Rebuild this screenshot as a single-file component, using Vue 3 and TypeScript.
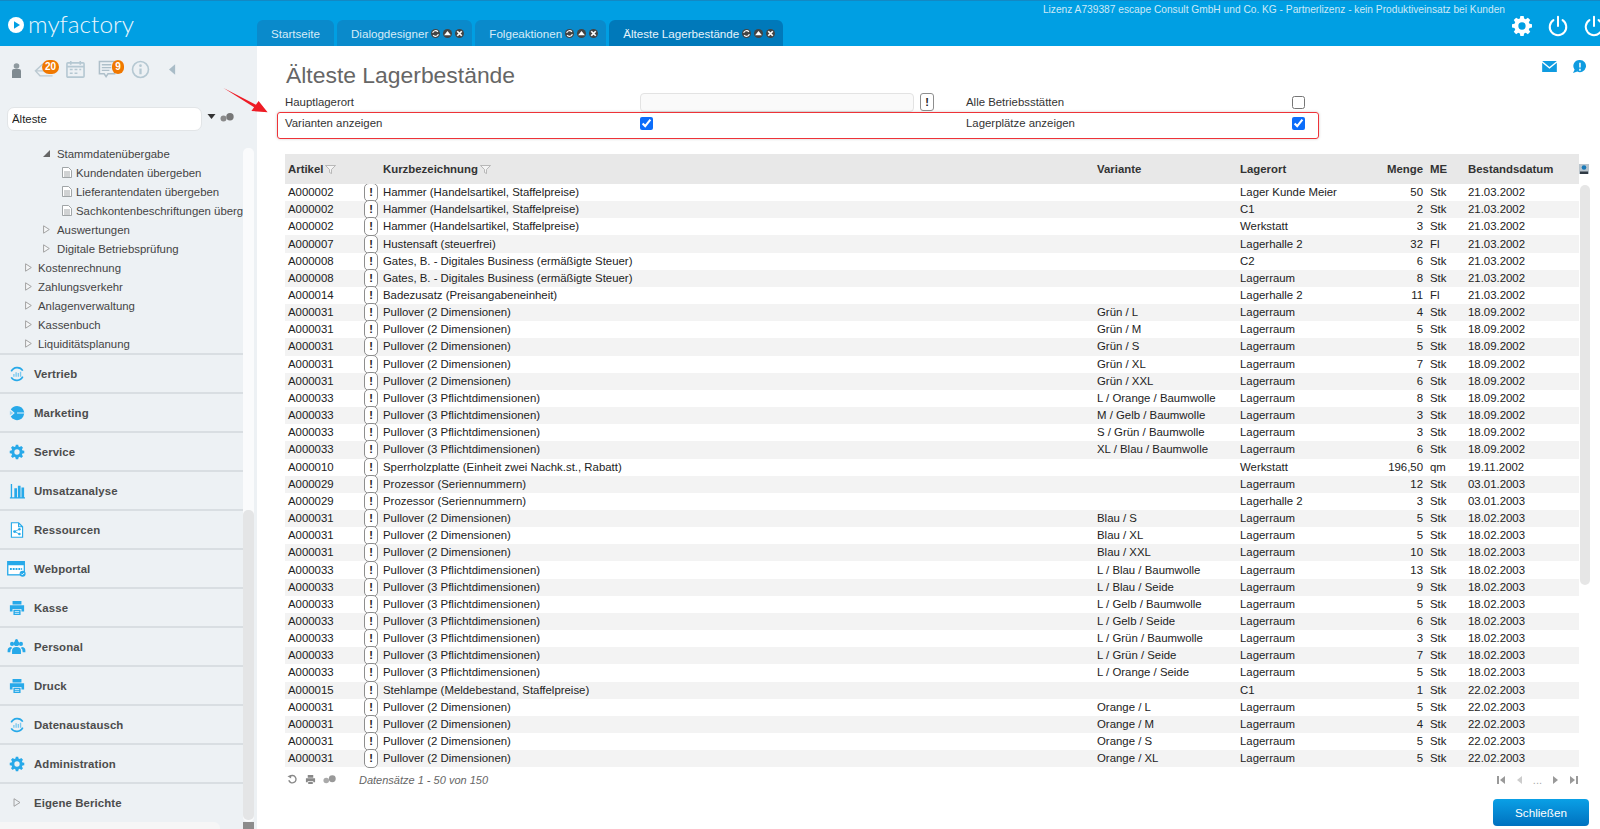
<script setup lang="ts">
interface Row { a: string; n: string; v: string; o: string; m: string; e: string; d: string }
const P2 = 'Pullover (2 Dimensionen)'
const P3 = 'Pullover (3 Pflichtdimensionen)'
const H = 'Hammer (Handelsartikel, Staffelpreise)'
const G = 'Gates, B. - Digitales Business (ermäßigte Steuer)'
const raw: string[][] = [
  ['A000002', H, '', 'Lager Kunde Meier', '50', 'Stk', '21.03.2002'],
  ['A000002', H, '', 'C1', '2', 'Stk', '21.03.2002'],
  ['A000002', H, '', 'Werkstatt', '3', 'Stk', '21.03.2002'],
  ['A000007', 'Hustensaft (steuerfrei)', '', 'Lagerhalle 2', '32', 'Fl', '21.03.2002'],
  ['A000008', G, '', 'C2', '6', 'Stk', '21.03.2002'],
  ['A000008', G, '', 'Lagerraum', '8', 'Stk', '21.03.2002'],
  ['A000014', 'Badezusatz (Preisangabeneinheit)', '', 'Lagerhalle 2', '11', 'Fl', '21.03.2002'],
  ['A000031', P2, 'Grün / L', 'Lagerraum', '4', 'Stk', '18.09.2002'],
  ['A000031', P2, 'Grün / M', 'Lagerraum', '5', 'Stk', '18.09.2002'],
  ['A000031', P2, 'Grün / S', 'Lagerraum', '5', 'Stk', '18.09.2002'],
  ['A000031', P2, 'Grün / XL', 'Lagerraum', '7', 'Stk', '18.09.2002'],
  ['A000031', P2, 'Grün / XXL', 'Lagerraum', '6', 'Stk', '18.09.2002'],
  ['A000033', P3, 'L / Orange / Baumwolle', 'Lagerraum', '8', 'Stk', '18.09.2002'],
  ['A000033', P3, 'M / Gelb / Baumwolle', 'Lagerraum', '3', 'Stk', '18.09.2002'],
  ['A000033', P3, 'S / Grün / Baumwolle', 'Lagerraum', '3', 'Stk', '18.09.2002'],
  ['A000033', P3, 'XL / Blau / Baumwolle', 'Lagerraum', '6', 'Stk', '18.09.2002'],
  ['A000010', 'Sperrholzplatte (Einheit zwei Nachk.st., Rabatt)', '', 'Werkstatt', '196,50', 'qm', '19.11.2002'],
  ['A000029', 'Prozessor (Seriennummern)', '', 'Lagerraum', '12', 'Stk', '03.01.2003'],
  ['A000029', 'Prozessor (Seriennummern)', '', 'Lagerhalle 2', '3', 'Stk', '03.01.2003'],
  ['A000031', P2, 'Blau / S', 'Lagerraum', '5', 'Stk', '18.02.2003'],
  ['A000031', P2, 'Blau / XL', 'Lagerraum', '5', 'Stk', '18.02.2003'],
  ['A000031', P2, 'Blau / XXL', 'Lagerraum', '10', 'Stk', '18.02.2003'],
  ['A000033', P3, 'L / Blau / Baumwolle', 'Lagerraum', '13', 'Stk', '18.02.2003'],
  ['A000033', P3, 'L / Blau / Seide', 'Lagerraum', '9', 'Stk', '18.02.2003'],
  ['A000033', P3, 'L / Gelb / Baumwolle', 'Lagerraum', '5', 'Stk', '18.02.2003'],
  ['A000033', P3, 'L / Gelb / Seide', 'Lagerraum', '6', 'Stk', '18.02.2003'],
  ['A000033', P3, 'L / Grün / Baumwolle', 'Lagerraum', '3', 'Stk', '18.02.2003'],
  ['A000033', P3, 'L / Grün / Seide', 'Lagerraum', '7', 'Stk', '18.02.2003'],
  ['A000033', P3, 'L / Orange / Seide', 'Lagerraum', '5', 'Stk', '18.02.2003'],
  ['A000015', 'Stehlampe (Meldebestand, Staffelpreise)', '', 'C1', '1', 'Stk', '22.02.2003'],
  ['A000031', P2, 'Orange / L', 'Lagerraum', '5', 'Stk', '22.02.2003'],
  ['A000031', P2, 'Orange / M', 'Lagerraum', '4', 'Stk', '22.02.2003'],
  ['A000031', P2, 'Orange / S', 'Lagerraum', '5', 'Stk', '22.02.2003'],
  ['A000031', P2, 'Orange / XL', 'Lagerraum', '5', 'Stk', '22.02.2003'],
]
const rows: Row[] = raw.map(([a, n, v, o, m, e, d]) => ({ a, n, v, o, m, e, d }))

const tabs = [
  { label: 'Startseite', tools: false, active: false },
  { label: 'Dialogdesigner', tools: true, active: false },
  { label: 'Folgeaktionen', tools: true, active: false },
  { label: 'Älteste Lagerbestände', tools: true, active: true },
]
const tree = [
  { label: 'Stammdatenübergabe', level: 2, kind: 'open' },
  { label: 'Kundendaten übergeben', level: 3, kind: 'doc' },
  { label: 'Lieferantendaten übergeben', level: 3, kind: 'doc' },
  { label: 'Sachkontenbeschriftungen übergeben', level: 3, kind: 'doc' },
  { label: 'Auswertungen', level: 2, kind: 'closed' },
  { label: 'Digitale Betriebsprüfung', level: 2, kind: 'closed' },
  { label: 'Kostenrechnung', level: 1, kind: 'closed' },
  { label: 'Zahlungsverkehr', level: 1, kind: 'closed' },
  { label: 'Anlagenverwaltung', level: 1, kind: 'closed' },
  { label: 'Kassenbuch', level: 1, kind: 'closed' },
  { label: 'Liquiditätsplanung', level: 1, kind: 'closed' },
]
const modules = [
  { label: 'Vertrieb', icon: 'cycle' },
  { label: 'Marketing', icon: 'pie' },
  { label: 'Service', icon: 'gear' },
  { label: 'Umsatzanalyse', icon: 'bars' },
  { label: 'Ressourcen', icon: 'share' },
  { label: 'Webportal', icon: 'web' },
  { label: 'Kasse', icon: 'print' },
  { label: 'Personal', icon: 'people' },
  { label: 'Druck', icon: 'print' },
  { label: 'Datenaustausch', icon: 'cycle' },
  { label: 'Administration', icon: 'gear' },
  { label: 'Eigene Berichte', icon: 'tri' },
]
const gearPath = 'M10.2 1h3.6l.5 2.7 1.8.8 2.3-1.6 2.6 2.6-1.6 2.3.8 1.8 2.7.5v3.6l-2.7.5-.8 1.8 1.6 2.3-2.6 2.6-2.3-1.6-1.8.8-.5 2.7h-3.6l-.5-2.7-1.8-.8-2.3 1.6-2.6-2.6 1.6-2.3-.8-1.8-2.7-.5v-3.6l2.7-.5.8-1.8-1.6-2.3 2.6-2.6 2.3 1.6 1.8-.8zM12 8a4 4 0 1 0 0 8 4 4 0 0 0 0-8z'
</script>

<template>
  <div class="app">
    <header class="topbar">
      <div class="logo">
        <svg class="logo-mark" viewBox="0 0 16 16"><circle cx="8" cy="8" r="8" fill="#fff" /><path d="M6 4.200 12 8l-6 3.800z" fill="#009fe3" /></svg>
        <span class="logo-text">myfactory</span>
      </div>
      <nav class="tabs">
        <div v-for="t in tabs" :key="t.label" class="tab" :class="{ active: t.active }">
          <span>{{ t.label }}</span>
          <span v-if="t.tools" class="tab-tools">
            <i class="tool"><svg viewBox="0 0 8 8"><path d="M1.500 3.500a2.600 2.600 0 0 1 4.600-1M6.500 4.500a2.600 2.600 0 0 1-4.600 1" fill="none" stroke="#fff" stroke-width="1.100" /></svg></i>
            <i class="tool"><svg viewBox="0 0 8 8"><path d="M4 1.800 7 5.500H1z" fill="#fff" /></svg></i>
            <i class="tool"><svg viewBox="0 0 8 8"><path d="m2 2 4 4M6 2 2 6" stroke="#fff" stroke-width="1.500" /></svg></i>
          </span>
        </div>
      </nav>
      <div class="top-right">
        <div class="license">Lizenz A739387 escape Consult GmbH und Co. KG - Partnerlizenz - kein Produktiveinsatz bei Kunden</div>
        <div class="top-icons">
          <svg class="top-icon" viewBox="0 0 24 24"><path :d="gearPath" fill="#fff" fill-rule="evenodd" /></svg>
          <svg class="top-icon" viewBox="0 0 24 24"><path d="M7 5.500a9 9 0 1 0 10 0M12 2v10" fill="none" stroke="#fff" stroke-width="2.200" stroke-linecap="round" /></svg>
          <svg class="top-icon" viewBox="0 0 24 24"><path d="M7 5.500a9 9 0 1 0 10 0M12 2v10" fill="none" stroke="#fff" stroke-width="2.200" stroke-linecap="round" /></svg>
        </div>
      </div>
    </header>

    <div class="body">
      <aside class="sidebar">
        <div class="quick">
          <svg class="q q-person" viewBox="0 0 10 15"><circle cx="5.500" cy="3" r="2.800" fill="#8f9a9f" /><path d="M1 15V8q0-2 2-2h5q2 0 2 2v7z" fill="#7f8a90" /></svg>
          <span class="q-wrap q-inbox">
            <svg viewBox="0 0 22 20"><path d="M10 3 1.500 11l5 5.500h14M1.500 11h12" fill="none" stroke="#bccad2" stroke-width="1.600" /></svg>
            <b class="badge">20</b>
          </span>
          <svg class="q q-cal" viewBox="0 0 20 20"><rect x="1" y="3" width="18" height="15" rx="1" fill="none" stroke="#b5c8d2" stroke-width="1.700" /><path d="M1 7h18M5 1v4M15 1v4M4 10h3M9 10h3M14 10h2M4 14h3M9 14h3" stroke="#b5c8d2" stroke-width="1.700" /></svg>
          <span class="q-wrap q-list">
            <svg viewBox="0 0 20 20"><path d="M1.500 1.500h16v13h-7l-2 3-2-3h-5z" fill="none" stroke="#aebfc9" stroke-width="1.600" /><path d="M4 5h10M4 8h10M4 11h8" stroke="#aebfc9" stroke-width="1.400" /></svg>
            <b class="badge small">9</b>
          </span>
          <svg class="q q-info" viewBox="0 0 20 20"><circle cx="10" cy="10" r="8.400" fill="none" stroke="#b5c8d2" stroke-width="1.700" /><circle cx="10" cy="6" r="1.400" fill="#b5c8d2" /><path d="M10 9v6" stroke="#b5c8d2" stroke-width="2.400" /></svg>
          <svg class="q q-back" viewBox="0 0 8 12"><path d="M7 0v12L0 6z" fill="#a9bcc7" /></svg>
        </div>
        <div class="search">
          <input class="search-input" value="Älteste" />
          <svg class="caret" viewBox="0 0 8 5"><path d="M0 0h8L4 5z" fill="#333" /></svg>
          <svg class="dots" viewBox="0 0 14 9"><circle cx="3.500" cy="5.500" r="3" fill="#8a8a8a" /><circle cx="10" cy="3.700" r="3.700" fill="#777" /></svg>
        </div>
        <div class="tree">
          <div v-for="n in tree" :key="n.label" class="tree-row" :class="'lvl' + n.level">
            <svg v-if="n.kind === 'open'" class="tw" viewBox="0 0 7 7"><path d="M7 0v7H0z" fill="#666" /></svg>
            <svg v-else-if="n.kind === 'closed'" class="tw" viewBox="0 0 7 9"><path d="M.6.800v7.400L6.300 4.500z" fill="#f6f7f8" stroke="#a2a2a2" /></svg>
            <svg v-else class="docicon" viewBox="0 0 10 11"><path d="M.5.500h6l3 3v7h-9zM2 5h6M2 7h6M2 9h6" fill="#fff" stroke="#8a8f92" stroke-width=".8" /></svg>
            <span>{{ n.label }}</span>
          </div>
        </div>
        <div class="modules">
          <div v-for="m in modules" :key="m.label" class="module">
            <span class="micon">
              <svg v-if="m.icon === 'cycle'" viewBox="0 0 18 18"><path d="M2.500 6a7.500 7.500 0 0 1 13-.8M15.500 12a7.500 7.500 0 0 1-13 .8" fill="none" stroke="#27a9e9" stroke-width="1.800" /><path d="M5.500 9v3M8 7v5M10.500 8v4M13 6.500V12" stroke="#7cc9ef" stroke-width="1.500" /></svg>
              <svg v-else-if="m.icon === 'pie'" viewBox="0 0 18 18"><path d="M9 1a8 8 0 1 1-7 11.800L6.500 9 2 5.200A8 8 0 0 1 9 1z" fill="#27a9e9" /><path d="M1 6.500 5 9l-4 2.500z" fill="#9ad6f4" /><path d="M9 9h8" stroke="#fff" stroke-width="1" /></svg>
              <svg v-else-if="m.icon === 'gear'" viewBox="0 0 24 24"><path :d="gearPath" fill="#27a9e9" fill-rule="evenodd" /></svg>
              <svg v-else-if="m.icon === 'bars'" viewBox="0 0 18 18"><path d="M2 1h1.500v16H2zM6 6h3v10H6zM10 3h3v13h-3zM14 5h3v11h-3zM1 16h17v1.500H1z" fill="#27a9e9" /></svg>
              <svg v-else-if="m.icon === 'share'" viewBox="0 0 16 20"><path d="M1 1h9l5 5v13H1zM10 1v5h5" fill="#fff" stroke="#27a9e9" stroke-width="1.400" /><circle cx="5" cy="12" r="1.800" fill="#27a9e9" /><circle cx="11" cy="9" r="1.600" fill="#27a9e9" /><circle cx="11" cy="15" r="1.600" fill="#27a9e9" /><path d="m5 12 6-3M5 12l6 3" stroke="#27a9e9" /></svg>
              <svg v-else-if="m.icon === 'web'" class="wide" viewBox="0 0 20 17"><rect x=".7" y=".7" width="17.600" height="14" fill="#fff" stroke="#27a9e9" stroke-width="1.400" /><path d="M1 1h17v3.500H1z" fill="#27a9e9" /><path d="M3 8.500h13" stroke="#27a9e9" stroke-width="2" stroke-dasharray="2 1" /><circle cx="16.500" cy="13.500" r="3.200" fill="#27a9e9" /><path d="m15 13.500 1.200 1.200 2-2" stroke="#fff" fill="none" /></svg>
              <svg v-else-if="m.icon === 'print'" viewBox="0 0 18 18"><path d="M4 1h10v4H4zM1 6h16v7h-3v-3H4v3H1zM5 11h8v6H5z" fill="#27a9e9" /><path d="M6.500 13h5M6.500 15h5" stroke="#fff" stroke-width=".8" /></svg>
              <svg v-else-if="m.icon === 'people'" class="wide" viewBox="0 0 20 18"><circle cx="10" cy="5" r="3" fill="#27a9e9" /><circle cx="5" cy="5.500" r="2.300" fill="#27a9e9" /><circle cx="15" cy="5.500" r="2.300" fill="#27a9e9" /><circle cx="10" cy="1.800" r="1.700" fill="#27a9e9" /><path d="M5 17v-4q0-4 5-4t5 4v4zM0 13q0-4 4-4l1 1q-2 1-2 5H0zM20 13q0-4-4-4l-1 1q2 1 2 5h3z" fill="#27a9e9" /></svg>
              <svg v-else class="small-tri" viewBox="0 0 8 10"><path d="M.7.800v8.400L7.300 5z" fill="none" stroke="#999" /></svg>
            </span>
            <span>{{ m.label }}</span>
          </div>
        </div>
        <div class="vscroll"><div class="vthumb"></div></div>
        <div class="hscroll"></div>
        <div class="corner"></div>
      </aside>

      <main class="main">
        <div class="title-row">
          <h1 class="title">Älteste Lagerbestände</h1>
          <div class="title-icons">
            <svg class="mail" viewBox="0 0 16 12"><path d="M0 0h16L8 6.500z" fill="#0f9be0" /><path d="M0 2v10h16V2L8 8.500z" fill="#0f9be0" /></svg>
            <svg class="help" viewBox="0 0 16 16"><path d="M8.500 1a6.500 6.500 0 1 1-2.800 12.400L1 15l1.800-3.600A6.500 6.500 0 0 1 8.500 1z" fill="#0f9be0" /><path d="M8.500 4v5M8.500 10.500v2" stroke="#fff" stroke-width="1.600" /></svg>
          </div>
        </div>
        <div class="form">
          <label>Hauptlagerort</label>
          <div class="field">
            <input class="txt" />
            <button class="ex ex-form">!</button>
          </div>
          <label>Alle Betriebsstätten</label>
          <input type="checkbox" class="chk" />
          <label>Varianten anzeigen</label>
          <div><input type="checkbox" class="chk" checked /></div>
          <label>Lagerplätze anzeigen</label>
          <input type="checkbox" class="chk" checked />
        </div>

        <div class="grid-head row-grid">
          <span class="hc">Artikel<svg class="flt" viewBox="0 0 11 9"><path d="M.5.500h10L6.500 4.500v4l-2-1v-3z" fill="#f4f4f4" stroke="#aaa" stroke-width=".8" /></svg></span>
          <span></span>
          <span class="hc">Kurzbezeichnung<svg class="flt" viewBox="0 0 11 9"><path d="M.5.500h10L6.500 4.500v4l-2-1v-3z" fill="#f4f4f4" stroke="#aaa" stroke-width=".8" /></svg></span>
          <span class="hc">Variante</span>
          <span class="hc">Lagerort</span>
          <span class="hc right">Menge</span>
          <span class="hc mecol">ME</span>
          <span class="hc">Bestandsdatum</span>
        </div>
        <svg class="col-icon" viewBox="0 0 10 10"><rect width="10" height="10" fill="#b9c4cc" /><circle cx="5" cy="3.500" r="2.300" fill="#1879b8" /><path d="M1 10V7.500h8V10z" fill="#2f3a44" /></svg>
        <div class="grid-body">
          <div v-for="(r, i) in rows" :key="i" class="row row-grid" :class="{ odd: i % 2 === 1 }">
            <span>{{ r.a }}</span>
            <span class="excell"><button class="ex">!</button></span>
            <span>{{ r.n }}</span>
            <span>{{ r.v }}</span>
            <span>{{ r.o }}</span>
            <span class="right">{{ r.m }}</span>
            <span class="mecol">{{ r.e }}</span>
            <span>{{ r.d }}</span>
          </div>
          <div class="rscroll"><div class="rthumb"></div></div>
        </div>
        <div class="grid-foot">
          <svg class="fi" viewBox="0 0 12 12"><path d="M3 2.800a4 4 0 1 1-1 4" fill="none" stroke="#888" stroke-width="1.500" /><path d="M.5 2.500 4.500 1v4z" fill="#888" /></svg>
          <svg class="fi" viewBox="0 0 12 12"><path d="M3 1h6v3H3zM1 4.500h10V9H9V7.500H3V9H1zM3.500 8.500h5V11h-5z" fill="#888" /></svg>
          <svg class="fi fi3" viewBox="0 0 14 9"><circle cx="3.500" cy="5.500" r="3" fill="#aaa" /><circle cx="10" cy="3.700" r="3.700" fill="#999" /></svg>
          <span class="count">Datensätze 1 - 50 von 150</span>
          <div class="pager">
            <svg viewBox="0 0 8 8"><path d="M0 0h2v8H0zM8 0v8L3 4z" fill="#999" /></svg>
            <svg viewBox="0 0 8 8"><path d="M7 0v8L2 4z" fill="#ccc" /></svg>
            <span>...</span>
            <svg viewBox="0 0 8 8"><path d="M1 0v8l5-4z" fill="#999" /></svg>
            <svg viewBox="0 0 8 8"><path d="M8 0H6v8h2zM0 0v8l5-4z" fill="#999" /></svg>
          </div>
        </div>
        <div class="actions"><button class="close">Schließen</button></div>

        <div class="redbox"></div>
        <svg class="arrow" viewBox="0 0 50 30"><path d="M0 0 36 18.500l3-4L49 27 31 25.500l3-4z" fill="#ee1c25" /></svg>
      </main>
    </div>
  </div>
</template>

<style>
html, body { margin: 0; padding: 0; background: #fff; }
</style>

<style scoped>
.app { width: 1600px; height: 829px; overflow: hidden; display: flex; flex-direction: column; font-family: "Liberation Sans", Arial, sans-serif; font-size: 11.400px; color: #333; }
.topbar { height: 46px; flex: none; background: #009fe3; border-top: 1px solid #1388c4; box-sizing: border-box; display: flex; position: relative; }
.logo { width: 257px; flex: none; display: flex; align-items: center; padding-left: 8px; box-sizing: border-box; color: #e9f6fd; }
.logo-mark { width: 16px; height: 16px; margin-right: 4px; margin-top: 2px; }
.logo-text { font-family: Lato, "Liberation Sans", sans-serif; font-weight: 300; font-size: 24.400px; line-height: 44px; }
.tabs { display: flex; align-items: flex-end; gap: 3px; }
.tab { height: 26px; padding: 1px 8px 0 14px; background: #0a8acb; border-radius: 6px 6px 0 0; display: flex; align-items: center; color: #d6ecf8; font-size: 11.600px; box-sizing: border-box; }
.tab.active { background: #0079ba; color: #e6f3fb; }
.tab:first-child { padding-right: 14px; }
.tab-tools { display: flex; gap: 3px; margin-left: 3px; }
.tool { width: 9px; height: 9px; border-radius: 50%; background: #444; display: flex; padding: 0; }
.tool svg { width: 9px; height: 9px; }
.top-right { flex: 1; display: flex; flex-direction: column; align-items: flex-end; min-width: 0; }
.license { font-size: 10.200px; color: #cde9f7; margin-top: 2px; margin-right: 95px; white-space: nowrap; line-height: 13px; }
.top-icons { display: flex; gap: 14px; margin-top: -2px; margin-right: -5px; }
.top-icon { width: 22px; height: 24px; }

.body { flex: 1; display: flex; min-height: 0; }
.sidebar { width: 257px; flex: none; background: #edf1f4; position: relative; overflow: hidden; display: flex; flex-direction: column; }
.quick { height: 48px; flex: none; position: relative; }
.q { position: absolute; }
.q-wrap { position: absolute; }
.q-wrap svg { width: 100%; height: 100%; display: block; }
.q-person { left: 11px; top: 17px; width: 10px; height: 15px; }
.q-inbox { left: 33px; top: 15px; width: 22px; height: 18px; }
.q-cal { left: 66px; top: 14px; width: 19px; height: 19px; }
.q-list { left: 98px; top: 14px; width: 19px; height: 19px; }
.q-info { left: 131px; top: 14px; width: 19px; height: 19px; }
.q-back { left: 169px; top: 18px; width: 7px; height: 11px; }
.badge { position: absolute; left: 9px; top: -1px; width: 17px; height: 14px; border-radius: 7px; background: #f07800; color: #fff; font-size: 10px; line-height: 14px; text-align: center; }
.badge.small { left: 14px; top: 0; width: 12px; }
.search { height: 24px; margin-top: 13px; flex: none; display: flex; align-items: center; padding-left: 7px; }
.search-input { width: 195px; height: 24px; box-sizing: border-box; border: 1px solid #e2e5e7; border-radius: 7px; background: #fff; font: 11.400px "Liberation Sans", Arial, sans-serif; color: #222; padding: 0 4px; outline: 0; }
.caret { width: 9px; height: 5px; margin-left: 5px; margin-top: -5px; }
.dots { width: 14px; height: 9px; margin-left: 4px; margin-top: -4px; }
.tree { width: 243px; flex: none; margin-top: 13px; overflow: hidden; height: 209px; }
.tree-row { height: 19px; display: flex; align-items: center; white-space: nowrap; color: #444; position: relative; }
.lvl1 { padding-left: 38px; }
.lvl2 { padding-left: 57px; }
.lvl3 { padding-left: 76px; }
.tw { position: absolute; width: 7px; height: 9px; margin-left: -13px; }
.lvl2 .tw { margin-left: -14px; }
.docicon { position: absolute; width: 10px; height: 11px; margin-left: -14px; }
.modules { width: 243px; flex: none; }
.module { height: 39px; box-sizing: border-box; border-top: 2px solid #d9dee2; display: flex; align-items: center; font-weight: bold; color: #4c4c4c; letter-spacing: 0.1px; }
.micon { width: 34px; flex: none; display: flex; justify-content: center; padding-right: 1px; box-sizing: border-box; }
.micon svg { width: 16px; height: 16px; }
.micon svg.wide { width: 19px; height: 16px; }
.micon svg.small-tri { width: 8px; height: 9px; }
.vscroll { position: absolute; left: 243px; top: 102px; width: 11px; height: 674px; background: #fafbfc; border-radius: 5px; }
.vthumb { position: absolute; left: 0; right: 0; top: 362px; height: 310px; background: #e4e5e6; border-radius: 5px; }
.hscroll { position: absolute; left: 0; top: 776px; width: 220px; height: 9px; background: #f6f6f6; border-radius: 0 6px 0 0; }
.corner { position: absolute; left: 243px; top: 776px; width: 11px; height: 9px; background: #8c8c8c; }

.main { flex: 1; min-width: 0; position: relative; padding-left: 28px; display: flex; flex-direction: column; }
.title-row { height: 46px; flex: none; display: flex; align-items: flex-start; }
.title { margin: 14px 0 0; font-size: 22.900px; font-weight: normal; color: #666; line-height: 30px; flex: 1; padding-left: 1px; }
.title-icons { display: flex; gap: 15px; margin: 13px 13px 0 0; align-items: center; }
.mail { width: 15px; height: 11px; }
.help { width: 15px; height: 15px; }
.form { display: grid; grid-template-columns: 355px 326px 326px 20px; grid-template-rows: 20px 22px; align-items: center; flex: none; height: 62px; align-content: start; color: #333; }
.field { display: flex; align-items: center; }
.txt { width: 274px; height: 19px; box-sizing: border-box; border: 1px solid #e3e3e3; border-radius: 4px; background: #fafafa; outline: 0; }
.chk { margin: 0; width: 13px; height: 13px; accent-color: #0b6dfa; display: block; }
.ex { display: block; width: 14px; height: 19px; padding: 0; background: #fff; border: 1px solid #8e8e8e; border-radius: 5px; font: bold 11px "Liberation Sans", Arial, sans-serif; color: #222; line-height: 15px; }
.ex-form { margin-left: 6px; height: 18px; border-radius: 3px; }
.row-grid { display: grid; grid-template-columns: 75px 23px 714px 143px 120px 63px 45px 1fr; width: 1294px; align-items: center; box-sizing: border-box; }
.row-grid > span { white-space: nowrap; }
.row-grid > span:first-child { padding-left: 3px; }
.grid-head { height: 30px; background: #e8e8e8; flex: none; font-weight: bold; }
.hc { display: flex; align-items: center; }
.hc.right { justify-content: flex-end; }
.flt { width: 11px; height: 9px; margin-left: 2px; }
.right { text-align: right; }
.mecol { padding-left: 7px; }
.col-icon { position: absolute; left: 1322px; top: 118px; width: 10px; height: 10px; }
.grid-body { height: 584px; flex: none; overflow: hidden; position: relative; width: 1315px; }
.row { height: 17.170px; line-height: 17px; color: #222; }
.row.odd { background: #f3f3f3; }
.excell { position: relative; height: 17px; }
.excell .ex { position: absolute; left: 4px; top: -1px; }
.rscroll { position: absolute; left: 1295px; top: 1px; width: 10px; height: 400px; }
.rthumb { width: 10px; height: 400px; border-radius: 5px; background: #e6e6e6; }
.grid-foot { height: 22px; flex: none; width: 1294px; display: flex; align-items: center; padding: 1px 0 0 2px; box-sizing: border-box; }
.fi { width: 11px; height: 11px; margin-right: 7px; }
.fi3 { width: 13px; height: 9px; margin-right: 0; }
.count { font-style: italic; font-size: 11px; color: #666; margin-left: 23px; }
.pager { margin-left: auto; display: flex; align-items: center; gap: 10px; color: #aaa; font-size: 11px; padding-right: 1px; }
.pager svg { width: 8px; height: 8px; }
.actions { flex: none; display: flex; justify-content: flex-end; padding-right: 11px; margin-top: 9px; }
.close { width: 96px; height: 27px; border: 0; border-radius: 4px; background: linear-gradient(#0aa0e6, #0071bf); color: #fff; font: 11.700px "Liberation Sans", Arial, sans-serif; padding: 0; }
.redbox { position: absolute; left: 20px; top: 66px; width: 1040px; height: 25px; border: 1.500px solid #ee3338; border-radius: 3px; box-shadow: 0 0 3px rgba(0,0,0,.2); pointer-events: none; }
.arrow { position: absolute; left: -36px; top: 42px; width: 50px; height: 27px; }
</style>
